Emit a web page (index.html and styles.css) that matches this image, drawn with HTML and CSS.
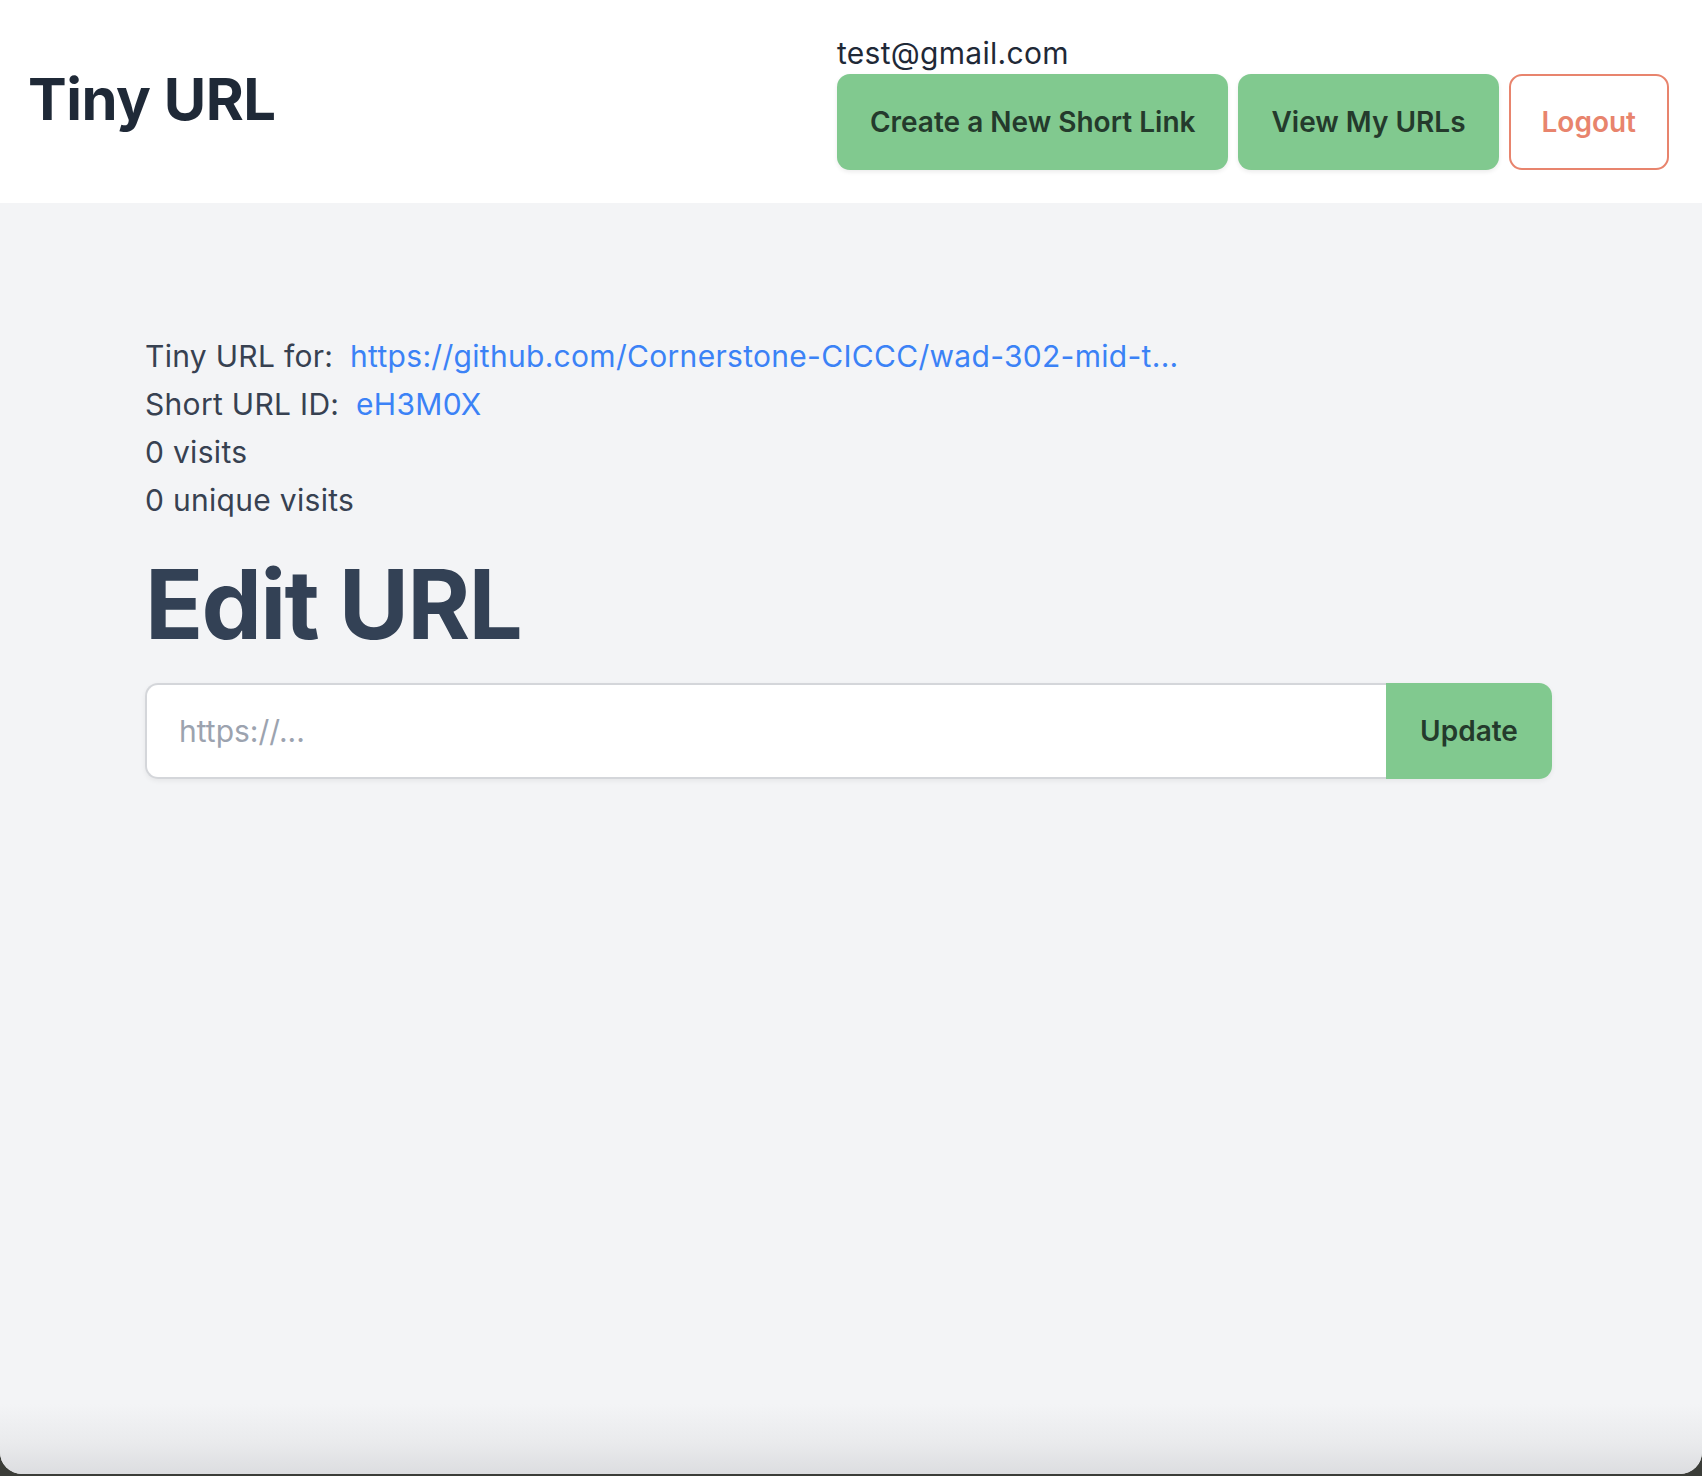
FILE: index.html
```html
<!DOCTYPE html>
<html lang="en">
<head>
<meta charset="utf-8">
<title>Tiny URL</title>
<link rel="stylesheet" href="styles.css">
</head>
<body>
<div class="window">
  <header class="topbar">
    <h1 class="brand">Tiny URL</h1>
    <div class="account">
      <div class="email">test@gmail.com</div>
      <nav class="actions">
        <a class="btn btn-green" href="#">Create a New Short Link</a>
        <a class="btn btn-green" href="#">View My URLs</a>
        <a class="btn btn-outline" href="#">Logout</a>
      </nav>
    </div>
  </header>
  <main class="main">
    <section class="container">
      <div class="info">
        <p class="line">Tiny URL for: <a class="link" href="#">https://github.com/Cornerstone-CICCC/wad-302-mid-t...</a></p>
        <p class="line">Short URL ID: <a class="link" href="#">eH3M0X</a></p>
        <p class="line">0 visits</p>
        <p class="line">0 unique visits</p>
      </div>
      <h2 class="title">Edit URL</h2>
      <form class="edit-form">
        <input class="url-input" type="text" placeholder="https://...">
        <button class="btn-update" type="button">Update</button>
      </form>
    </section>
  </main>
</div>
</body>
</html>
```

FILE: styles.css
```css
* { box-sizing: border-box; }
html, body {
  margin: 0;
  padding: 0;
  height: 100%;
  background: #3b3d38;
}
body {
  font-family: Inter, "Noto Sans", "Liberation Sans", sans-serif;
}
.window {
  height: 1474px;
  display: flex;
  flex-direction: column;
  border-radius: 0 0 22px 22px;
  overflow: hidden;
  background: #f3f4f6;
}
.topbar {
  background: #ffffff;
  height: 203px;
  flex: 0 0 auto;
  display: flex;
  align-items: center;
  justify-content: space-between;
  padding: 32px 33px 32px 28px;
}
.brand {
  margin: 0 0 5px 0;
  font-size: 58px;
  line-height: 72px;
  font-weight: 700;
  color: #1f2937;
  letter-spacing: -0.5px;
}
.account {
  display: flex;
  flex-direction: column;
  align-items: flex-start;
  margin-top: 2px;
}
.email {
  font-size: 30px;
  line-height: 42px;
  color: #1f2937;
  letter-spacing: 0.3px;
  margin-top: -3px;
}
.actions {
  display: flex;
  gap: 10px;
}
.btn {
  display: inline-flex;
  align-items: center;
  justify-content: center;
  height: 96px;
  padding: 0 33px;
  border-radius: 13px;
  font-size: 28px;
  font-weight: 600;
  text-decoration: none;
}
.btn-green {
  background: #81c98f;
  color: #243a2c;
  box-shadow: 0 2px 4px rgba(0,0,0,0.08);
}
.btn-outline {
  background: #ffffff;
  color: #e8846d;
  border: 2px solid #e8846d;
  padding: 0 31px;
}
.main {
  flex: 1 1 auto;
  background: linear-gradient(to bottom, #f3f4f6 0, #f3f4f6 calc(100% - 70px), #e9eaec calc(100% - 30px), #dcdde0 100%);
  padding-top: 129px;
}
.container {
  width: 1407px;
  margin-left: calc(50% - 706px);
}
.info { margin: 0; }
.line {
  margin: 0;
  font-size: 30px;
  line-height: 48px;
  color: #374151;
  letter-spacing: 0.3px;
}
.link {
  color: #3b82f6;
  text-decoration: none;
  margin-left: 8px;
}
.title {
  margin: 32px 0 0 0;
  font-size: 96px;
  line-height: 96px;
  font-weight: 700;
  color: #334155;
  letter-spacing: -1.8px;
}
.edit-form {
  margin-top: 31px;
  display: flex;
  height: 96px;
  border-radius: 13px;
  box-shadow: 0 2px 5px rgba(0,0,0,0.06);
}
.url-input {
  flex: 1 1 auto;
  height: 96px;
  border: 2px solid #d4d6da;
  border-right: none;
  border-radius: 13px 0 0 13px;
  background: #ffffff;
  padding: 0 32px;
  font-family: Inter, "Noto Sans", "Liberation Sans", sans-serif;
  font-size: 30px;
  color: #111827;
  outline: none;
}
.url-input::placeholder { color: #9ca3af; }
.btn-update {
  flex: 0 0 166px;
  height: 96px;
  border: none;
  border-radius: 0 13px 13px 0;
  background: #81c98f;
  color: #243a2c;
  font-family: Inter, "Noto Sans", "Liberation Sans", sans-serif;
  font-size: 28px;
  font-weight: 600;
  cursor: pointer;
}
```
